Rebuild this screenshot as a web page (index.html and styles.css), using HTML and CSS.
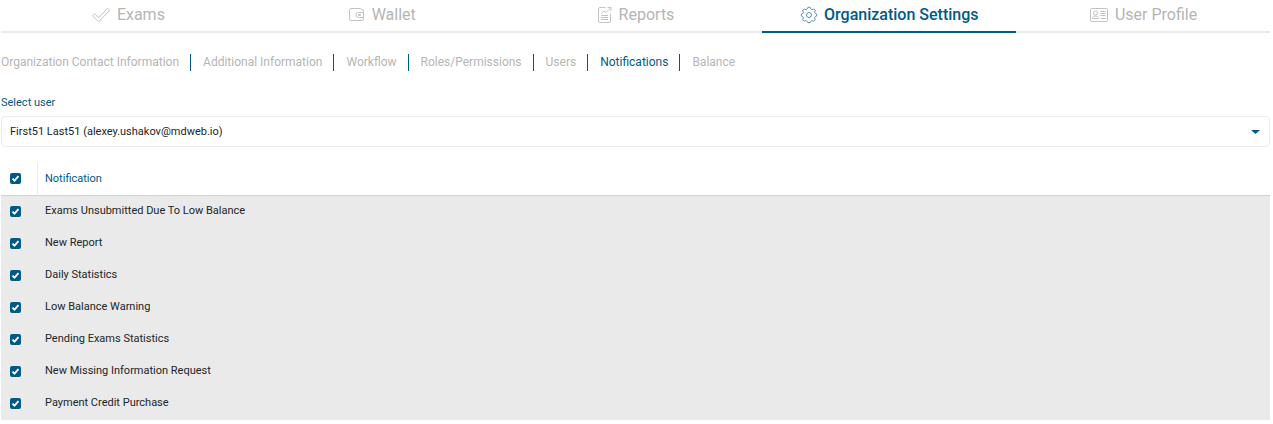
FILE: index.html
```html
<!DOCTYPE html>
<html lang="en">
<head>
<meta charset="utf-8">
<title>Organization Settings – Notifications</title>
<link rel="stylesheet" href="styles.css">
</head>
<body>
<nav class="tabs" aria-label="Main">
  <a class="tab" href="#exams">
    <svg class="icon" width="20" height="18" viewBox="0 0 20 18"><path d="M1.5 9.8 3.6 7.8 7.6 11.8 16.6 2.2 18.7 4.2 7.7 15.8Z"/></svg>
    <span>Exams</span>
  </a>
  <a class="tab" href="#wallet">
    <svg class="icon" width="18" height="18" viewBox="0 0 18 18"><path d="M15.500 6.500V5Q15.500 3.500 14 3.500L12.500 2.500H3Q1.500 2.500 1.500 4V13Q1.500 14.500 3 14.500H14Q15.500 14.500 15.500 13V11.500M15.500 6.500H10.500A2.500 2.500 0 0 0 10.500 11.500H15.500ZM10.500 8.500h2v1h-2z"/></svg>
    <span>Wallet</span>
  </a>
  <a class="tab" href="#reports">
    <svg class="icon" width="16" height="18" viewBox="0 0 16 18"><path d="M8.500 1.500H3Q1.500 1.500 1.500 3V15Q1.500 16.500 3 16.500H12Q13.500 16.500 13.500 15V7.500M4 13.500H11M4 11.500H11M4 9.500H11M4.500 7.500 7 5 9 6.500 13.500 2M10.500 1.500H14V5"/></svg>
    <span>Reports</span>
  </a>
  <a class="tab active" href="#organization" aria-current="page">
    <svg class="icon" width="18" height="18" viewBox="0 0 18 18"><path d="M7 3.200Q7.200 1.200 9 1.200T11 3.200Q11.400 3.800 12.200 3.600Q13.700 2.500 14.900 3.700T14.500 6.200Q14.400 7 15.100 7.200Q16.800 7.500 16.800 9T15.100 10.900Q14.400 11.200 14.600 11.900Q15.800 13.400 14.700 14.500T12.200 14.600Q11.400 14.400 11.200 15.100Q10.800 16.800 9 16.800T6.800 15.100Q6.600 14.400 5.800 14.600Q4.400 15.600 3.300 14.500T3.400 11.900Q3.600 11.200 2.900 10.900Q1.200 10.500 1.200 9T2.900 7.200Q3.600 7 3.500 6.200Q2 4.800 3.200 3.700T5.800 3.600Q6.600 3.800 7 3.200Z"/><circle cx="9" cy="9" r="2.500"/></svg>
    <span>Organization Settings</span>
  </a>
  <a class="tab" href="#profile">
    <svg class="icon" width="20" height="18" viewBox="0 0 20 18"><rect x="1.500" y="2.500" width="17" height="13" rx="1"/><circle cx="6.500" cy="7" r="2"/><path d="M3.500 12.500V11.500Q4 10 6.500 10T9.500 11.500V12.500ZM11.500 5.500H16.500M11.500 7.500H16.500M11.500 9.500H16.500M11.500 12.500H16.500"/></svg>
    <span>User Profile</span>
  </a>
</nav>
<nav class="subtabs" aria-label="Organization settings">
  <a class="subtab" href="#contact">Organization Contact Information</a>
  <a class="subtab" href="#additional">Additional Information</a>
  <a class="subtab" href="#workflow">Workflow</a>
  <a class="subtab" href="#roles">Roles/Permissions</a>
  <a class="subtab" href="#users">Users</a>
  <a class="subtab current" href="#notifications" aria-current="page">Notifications</a>
  <a class="subtab" href="#balance">Balance</a>
</nav>
<main>
  <label class="label" for="user">Select user</label>
  <div class="picker">
    <select class="select" id="user"><option>First51 Last51 (alexey.ushakov@mdweb.io)</option></select>
    <svg class="arrow" width="9" height="4" viewBox="0 0 9 4"><path d="M0 0H9L4.500 4Z"/></svg>
  </div>
  <table class="grid">
    <thead>
      <tr><th class="pick"><input class="check" type="checkbox" id="all" aria-label="Select all" checked></th><th class="head">Notification</th></tr>
    </thead>
    <tbody>
      <tr><td class="pick"><input class="check" type="checkbox" id="n1" checked></td><td><label for="n1">Exams Unsubmitted Due To Low Balance</label></td></tr>
      <tr><td class="pick"><input class="check" type="checkbox" id="n2" checked></td><td><label for="n2">New Report</label></td></tr>
      <tr><td class="pick"><input class="check" type="checkbox" id="n3" checked></td><td><label for="n3">Daily Statistics</label></td></tr>
      <tr><td class="pick"><input class="check" type="checkbox" id="n4" checked></td><td><label for="n4">Low Balance Warning</label></td></tr>
      <tr><td class="pick"><input class="check" type="checkbox" id="n5" checked></td><td><label for="n5">Pending Exams Statistics</label></td></tr>
      <tr><td class="pick"><input class="check" type="checkbox" id="n6" checked></td><td><label for="n6">New Missing Information Request</label></td></tr>
      <tr><td class="pick"><input class="check" type="checkbox" id="n7" checked></td><td><label for="n7">Payment Credit Purchase</label></td></tr>
    </tbody>
  </table>
</main>
</body>
</html>
```
FILE: styles.css
```css
* { box-sizing: border-box; }
body {
  margin: 0;
  padding: 0 3px 0 1px;
  background: #fff;
  color: #212529;
  font: 11px/16px Roboto, sans-serif;
}
a { text-decoration: none; }

.tabs { display: grid; grid-template-columns: repeat(5, 1fr); }
.tab {
  display: flex;
  justify-content: center;
  align-items: center;
  gap: 6px;
  height: 33px;
  padding-bottom: 2px;
  border-bottom: 2px solid #ebebeb;
  color: #b5b5b5;
  font-size: 16px;
  line-height: 19px;
}
.tab.active { border-color: #005a87; color: #005a87; font-weight: 500; }
.icon { fill: none; stroke: currentColor; stroke-width: 1; opacity: .8; }
.active .icon { opacity: .65; }

.subtabs { display: flex; padding-top: 21px; }
.subtab {
  padding-right: 11px;
  margin-right: 12px;
  border-right: 1px solid #005a87;
  color: #b5b5b5;
  font-size: 12px;
  line-height: 17px;
}
.subtab:last-child { border: 0; }
.current { color: #005a87; }

.label { display: block; margin-top: 24px; color: #005a87; }
.picker { display: grid; align-items: center; margin-top: 5px; }
.select {
  grid-area: 1 / 1;
  width: 100%;
  height: 31px;
  padding: 1px 8px 0;
  appearance: none;
  border: 1px solid #ebebeb;
  border-radius: 4px;
  background: #fff;
  color: #212529;
  font: inherit;
}
.arrow {
  grid-area: 1 / 1;
  justify-self: end;
  margin-right: 10px;
  fill: #005a87;
  pointer-events: none;
}

.grid { width: 100%; margin-top: 16px; border-collapse: separate; border-spacing: 0; }
.grid th, .grid td { height: 32px; padding: 0 0 2px 7px; text-align: left; font-weight: 400; }
.grid th { height: 33px; padding-bottom: 1px; border-bottom: 1px solid #cdd3d3; color: #005a87; }
.grid tbody { background: #eaeaea; }
.grid .pick { width: 36px; padding: 0 0 1px 9px; }
.grid th.pick { padding-bottom: 2px; }
.grid .head { border-left: 1px solid #ebebeb; }
.grid td + td { padding-left: 8px; }
.check {
  display: block;
  width: 11px;
  height: 11px;
  margin: 0;
  appearance: none;
  border-radius: 2px;
  background: #005a87 url("data:image/svg+xml,%3Csvg xmlns='http://www.w3.org/2000/svg' viewBox='0 0 11 11'%3E%3Cpath d='M2.500 5.700 4.500 7.700 8.500 3.200' fill='none' stroke='white' stroke-width='1.800'/%3E%3C/svg%3E") center / 100% no-repeat;
}
```
